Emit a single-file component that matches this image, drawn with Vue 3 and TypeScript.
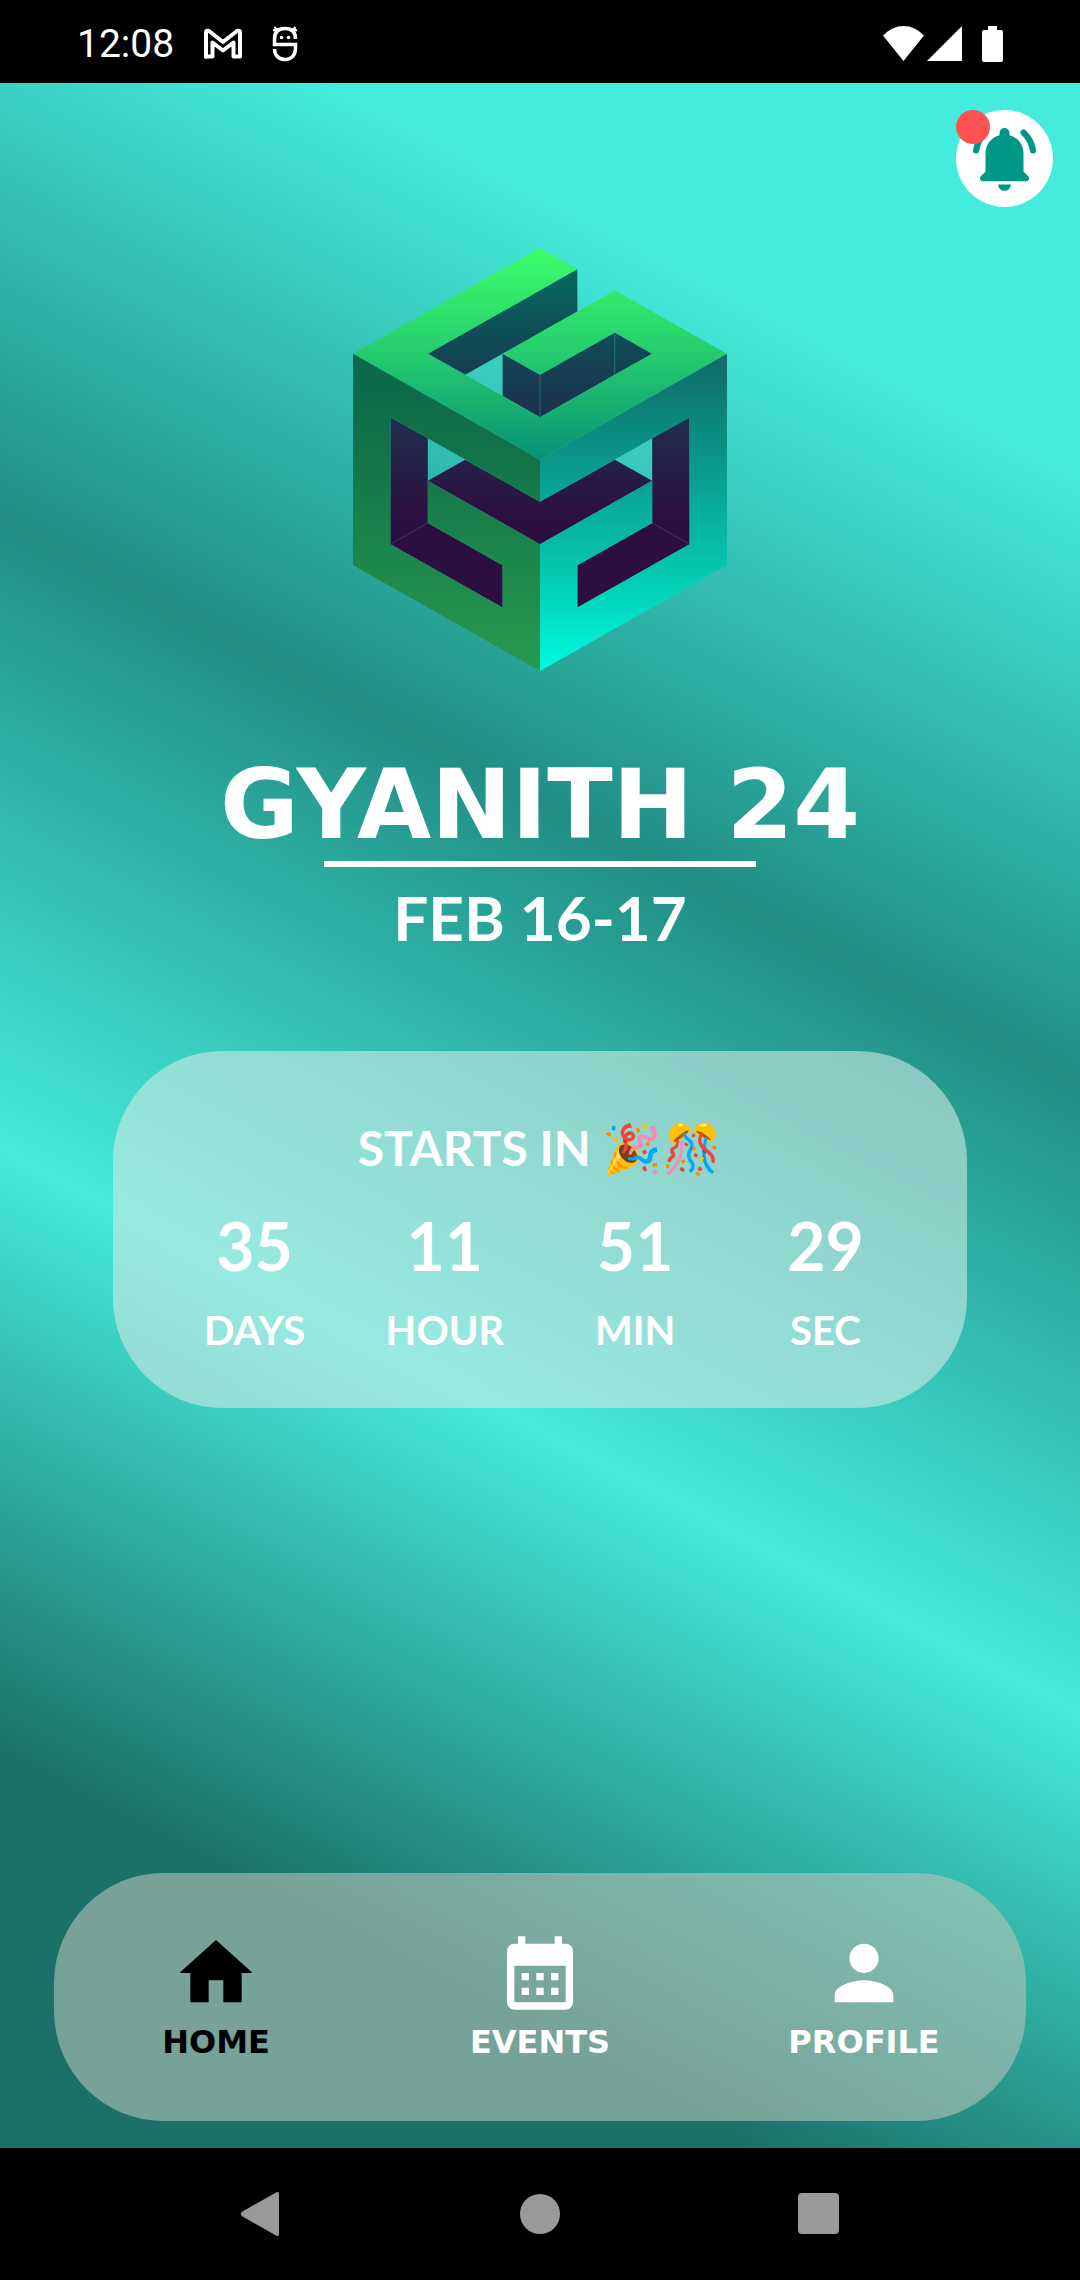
<script setup lang="ts">
import { ref } from 'vue'

interface CountdownPart {
  label: string
  value: string
}

interface Tab {
  id: string
  label: string
  path: string
}

const countdown: CountdownPart[] = [
  { label: 'DAYS', value: '35' },
  { label: 'HOUR', value: '11' },
  { label: 'MIN', value: '51' },
  { label: 'SEC', value: '29' },
]

const tabs: Tab[] = [
  { id: 'home', label: 'HOME', path: 'M10 20v-6h4v6h5v-8h3L12 3 2 12h3v8z' },
  {
    id: 'events',
    label: 'EVENTS',
    path: 'M7 12h2v2H7zM11 12h2v2h-2zM15 12h2v2h-2zM7 16h2v2H7zM11 16h2v2h-2zM15 16h2v2h-2zM19 4h-1V2h-2v2H8V2H6v2H5a2 2 0 0 0-2 2v14a2 2 0 0 0 2 2h14a2 2 0 0 0 2-2V6a2 2 0 0 0-2-2zm0 16H5V10h14z',
  },
  {
    id: 'profile',
    label: 'PROFILE',
    path: 'M12 12c2.21 0 4-1.79 4-4s-1.79-4-4-4-4 1.79-4 4 1.79 4 4 4zm0 2c-2.67 0-8 1.34-8 4v2h16v-2c0-2.66-5.33-4-8-4z',
  },
]

const active = ref('home')
</script>

<template>
  <div class="screen">
    <header class="status">
      <div class="status-side">
        <span class="clock">12:08</span>
        <svg class="gmail" viewBox="0 0 40 32" fill="none" stroke="#fff" stroke-width="4" stroke-linejoin="round">
          <path d="M3 29V4.500Q3 2 6 3L20 14 34 3Q37 2 37 4.500V28.500H30.500V14.500L20 22.500 9.500 14.500V28.500H3z" />
        </svg>
        <svg class="bot" viewBox="0 0 26 36" fill="none" stroke="#fff" stroke-width="3.500">
          <path d="M23.500 13C23.500 6 19.500 2.500 13 2.500S2.500 6 2.500 13V18.500H23.500V22C23.500 29 19.500 33.500 13 33.500S2.500 29 2.500 23" />
          <path d="M2.500 1l4 5M23.500 1l-4 5M1 4.500l5-1.500M25 4.500l-5-1.500" stroke-width="2.200" />
          <circle cx="9.500" cy="11.500" r="1.800" fill="#fff" stroke="none" />
          <circle cx="16.500" cy="11.500" r="1.800" fill="#fff" stroke="none" />
        </svg>
      </div>
      <div class="status-side">
        <svg class="wifi" viewBox="0 0 41 35" fill="#fff"><path d="M0 9.500Q9 0 20.500 0T41 9.500L20.500 35z" /></svg>
        <svg class="signal" viewBox="0 0 35 35" fill="#fff"><path d="M35 0V35H0z" /></svg>
        <svg class="battery" viewBox="0 0 21 36" fill="#fff"><path d="M6 0h9v4h4q2 0 2 2v28q0 2-2 2H2q-2 0-2-2V6q0-2 2-2h4z" /></svg>
      </div>
    </header>

    <main class="content">
      <button class="bell" type="button" aria-label="Notifications">
        <svg viewBox="0 0 97 97" fill="#009688">
          <path d="M43.500 23a5 5 0 0 1 10 0v2.200C62 27.500 67.500 34.500 67.500 43.500V61.500L72 66Q74 68.500 72.500 70 71.500 71.200 70 71.200H27Q25.500 71.200 24.500 70 23 68.500 25 66L29.500 61.500V43.500C29.500 34.500 35 27.500 43.500 25.200z" />
          <path d="M42 74.500H55Q54 80.800 48.500 80.800T42 74.500z" />
          <path d="M67.500 22.500Q75.500 30 77 40.500M29.500 22.500Q21.500 30 20 40.500" fill="none" stroke="#009688" stroke-width="6.200" stroke-linecap="round" />
        </svg>
        <span class="dot"></span>
      </button>

      <svg class="logo" viewBox="0 0 1120 1267" role="img" aria-label="Gyanith logo">
        <defs>
          <linearGradient id="top" gradientUnits="userSpaceOnUse" x1="0" y1="0" x2="0" y2="634">
            <stop offset="0" stop-color="#3cff69" />
            <stop offset="0.500" stop-color="#25cc6e" />
            <stop offset="0.750" stop-color="#17af70" />
            <stop offset="1" stop-color="#079177" />
          </linearGradient>
          <linearGradient id="left" gradientUnits="userSpaceOnUse" x1="0" y1="317" x2="0" y2="1267">
            <stop offset="0" stop-color="#0a6649" />
            <stop offset="0.300" stop-color="#13724a" />
            <stop offset="1" stop-color="#269b4d" />
          </linearGradient>
          <linearGradient id="right" gradientUnits="userSpaceOnUse" x1="0" y1="317" x2="0" y2="1267">
            <stop offset="0" stop-color="#106a66" />
            <stop offset="0.320" stop-color="#0a9587" />
            <stop offset="0.700" stop-color="#04cab3" />
            <stop offset="1" stop-color="#00fbe0" />
          </linearGradient>
          <linearGradient id="inner" gradientUnits="userSpaceOnUse" x1="0" y1="63" x2="0" y2="507">
            <stop offset="0" stop-color="#04695d" />
            <stop offset="0.500" stop-color="#114a55" />
            <stop offset="1" stop-color="#1d2f4d" />
          </linearGradient>
          <linearGradient id="deep" gradientUnits="userSpaceOnUse" x1="0" y1="507" x2="0" y2="800">
            <stop offset="0" stop-color="#1e304d" />
            <stop offset="1" stop-color="#2c0f40" />
          </linearGradient>
        </defs>
        <g fill="url(#inner)">
          <path d="M224 317L672 63V190L336 380z" />
          <path d="M448 317L560 380V507L448 443z" />
          <path d="M560 380L784 253V380L560 507z" />
          <path d="M784 253L896 317 784 380z" />
        </g>
        <g fill="url(#deep)">
          <path d="M224 697L336 634 560 760 784 634 896 697 560 887z" />
          <path d="M112 507L224 570V824L112 887z" />
          <path d="M112 887L224 824 448 950V1077z" />
          <path d="M1008 507L896 570V824L1008 887z" />
          <path d="M1008 887L896 824 672 950V1077z" />
        </g>
        <path fill="url(#top)" d="M560 0L672 63 224 317 560 507 896 317 784 253 560 380 448 317 784 127 1120 317 560 634 0 317z" />
        <path fill="url(#left)" d="M0 317L560 634V760L112 507V887L448 1077V950L224 824V697L560 887V1267L0 950z" />
        <path fill="url(#right)" d="M1120 317L560 634V760L1008 507V887L672 1077V950L896 824V697L560 887V1267L1120 950z" />
        <path d="M560 380V507M784 253V380" fill="none" stroke="#2c7d83" stroke-width="2" />
        <path d="M112 887L224 824M1008 887L896 824" fill="none" stroke="#3a3a5c" stroke-width="2" />
      </svg>

      <h1 class="title">GYANITH 24</h1>
      <hr class="rule" />
      <p class="date">FEB 16-17</p>

      <section class="card">
        <h2 class="starts">STARTS IN 🎉🎊</h2>
        <dl class="timer">
          <div v-for="part in countdown" :key="part.label" class="part">
            <dt>{{ part.label }}</dt>
            <dd>{{ part.value }}</dd>
          </div>
        </dl>
      </section>

      <nav class="tabs">
        <a
          v-for="tab in tabs"
          :key="tab.id"
          :href="'#' + tab.id"
          class="tab"
          :class="{ active: active === tab.id }"
          @click="active = tab.id"
        >
          <svg viewBox="0 0 24 24" fill="currentColor" fill-rule="evenodd"><path :d="tab.path" /></svg>
          <span>{{ tab.label }}</span>
        </a>
      </nav>
    </main>

    <footer class="system">
      <button type="button" aria-label="Back">
        <svg viewBox="0 0 44 46"><path d="M38 1.500Q41 0 41 3V43Q41 46 38 44.500L4.500 25.500Q1 23 4.500 20.500z" /></svg>
      </button>
      <button type="button" aria-label="Home">
        <svg viewBox="0 0 44 46"><circle cx="22" cy="23" r="20" /></svg>
      </button>
      <button type="button" aria-label="Recent apps">
        <svg viewBox="0 0 44 46"><rect x="0" y="2" width="41" height="41" rx="4" /></svg>
      </button>
    </footer>
  </div>
</template>

<style>
body {
  margin: 0;
  background: #000;
}
</style>

<style scoped>
.screen {
  display: flex;
  flex-direction: column;
  min-height: 100vh;
  color: #fff;
  font-family: Lato, sans-serif;
}

svg {
  display: block;
}

button {
  padding: 0;
  border: 0;
  background: none;
}

.status {
  display: flex;
  justify-content: space-between;
  align-items: center;
  height: 83px;
  padding: 0 77px;
  background: #000;
}

.status-side {
  display: flex;
  align-items: center;
  padding-top: 4px;
}

.clock {
  font: 400 39px/44px Roboto, sans-serif;
}

.gmail {
  width: 40px;
  height: 32px;
  margin-left: 29px;
}

.bot {
  width: 26px;
  height: 36px;
  margin-left: 29px;
}

.wifi {
  width: 41px;
  height: 35px;
}

.signal {
  width: 35px;
  height: 35px;
  margin-left: 3px;
}

.battery {
  width: 21px;
  height: 36px;
  margin-left: 20px;
}

.content {
  flex: 1;
  display: flex;
  flex-direction: column;
  align-items: center;
  background: linear-gradient(207.6deg, #45ebdc 15%, #218e84 38%, #45ebdc 62%, #1b7168 85%);
}

.bell {
  position: relative;
  align-self: flex-end;
  width: 97px;
  height: 97px;
  margin: 27px 27px 0 0;
  border-radius: 50%;
  background: #fff;
}

.dot {
  position: absolute;
  top: 0;
  left: 0;
  width: 34px;
  height: 34px;
  border-radius: 50%;
  background: #ff5252;
}

.logo {
  width: 374px;
  height: 423px;
  margin-top: 41px;
}

.title {
  margin: 84px 0 0;
  font: 700 96px/100px "DejaVu Sans", sans-serif;
}

.rule {
  width: 40%;
  height: 6px;
  margin: 6px 0 0;
  border: 0;
  background: #fff;
}

.date {
  margin: 18px 0 0;
  font-size: 62px;
  font-weight: 700;
  line-height: 64px;
}

.card {
  box-sizing: border-box;
  width: 79%;
  margin-top: 102px;
  padding: 67px 46px 54px;
  border-radius: 110px;
  background: rgba(207, 233, 229, 0.6);
}

.starts {
  height: 60px;
  margin: 0;
  font-size: 48px;
  font-weight: 700;
  line-height: 60px;
  text-align: center;
}

.timer {
  display: flex;
  margin: 32px 0 0;
}

.part {
  flex: 1;
  display: flex;
  flex-direction: column-reverse;
  gap: 24px;
  text-align: center;
}

.part dt {
  font-size: 40px;
  font-weight: 700;
  line-height: 48px;
}

.part dd {
  margin: 0;
  font-size: 66px;
  font-weight: 700;
  line-height: 72px;
}

.tabs {
  box-sizing: border-box;
  display: flex;
  width: 90%;
  margin: auto 0 27px;
  padding: 56px 0 59px;
  border-radius: 110px;
  background: rgba(182, 195, 184, 0.6);
}

.tab {
  flex: 1;
  display: flex;
  flex-direction: column;
  align-items: center;
  gap: 5px;
  color: #fff;
  font: 700 32px/40px "DejaVu Sans", sans-serif;
  text-decoration: none;
}

.tab.active {
  color: #000;
}

.tab svg {
  width: 88px;
  height: 88px;
}

.system {
  display: flex;
  justify-content: center;
  align-items: center;
  gap: 236px;
  height: 132px;
  background: #000;
}

.system svg {
  width: 44px;
  height: 46px;
  fill: #999;
}
</style>
